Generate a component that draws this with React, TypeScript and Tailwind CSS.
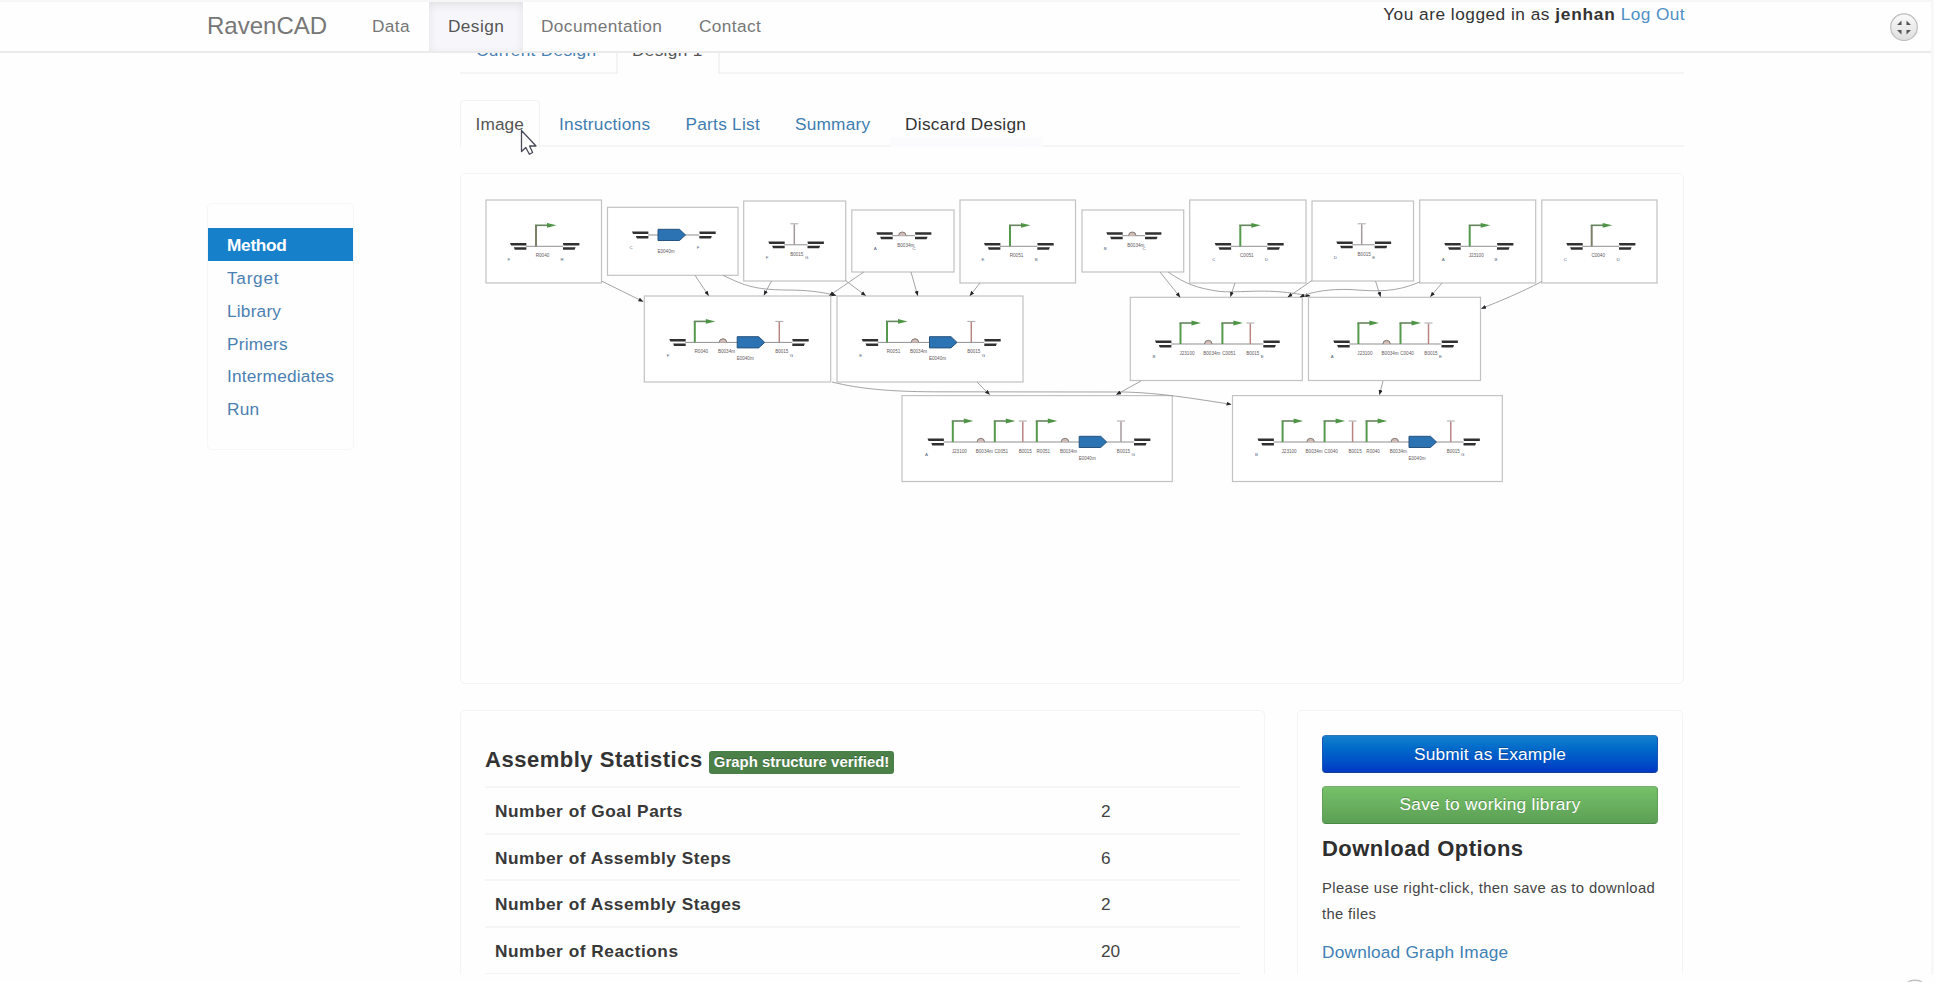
import type { ReactNode } from 'react';

const INK = '#9a9a9d';

type Glyph =
  | { k: 'p'; x: number; t: string; c?: string }
  | { k: 'r'; x: number; t: string }
  | { k: 't'; x: number; t: string; c?: string }
  | { k: 'c'; x: number; t: string };

interface NodeSpec {
  box: [number, number, number, number];
  left: number;
  right: number;
  y: number;
  ends: [string, string];
  glyphs: Glyph[];
}

const GREEN = '#559a4c';
const OLIVE = '#7d8069';
const RED = '#b98583';

const nodes: NodeSpec[] = [
  { box: [486, 200, 601.5, 283], left: 510, right: 563, y: 246.3, ends: ['F', 'R'], glyphs: [{ k: 'p', x: 536, t: 'R0040', c: OLIVE }] },
  { box: [607.5, 207.3, 738, 275.3], left: 632, right: 699.3, y: 235, ends: ['C', 'F'], glyphs: [{ k: 'c', x: 657.5, t: 'E0040m' }] },
  { box: [743.7, 201, 845.7, 281], left: 768.3, right: 807.5, y: 244.8, ends: ['F', 'G'], glyphs: [{ k: 't', x: 794.3, t: 'B0015', c: '#a3999a' }] },
  { box: [851.8, 210, 954, 272], left: 876.3, right: 915, y: 235.7, ends: ['A', 'C'], glyphs: [{ k: 'r', x: 902.3, t: 'B0034m' }] },
  { box: [960, 200, 1075.5, 283], left: 984, right: 1037.3, y: 246.3, ends: ['E', 'B'], glyphs: [{ k: 'p', x: 1010, t: 'R0051' }] },
  { box: [1082, 210, 1183.7, 272], left: 1106.3, right: 1145, y: 235.7, ends: ['B', 'C'], glyphs: [{ k: 'r', x: 1132.3, t: 'B0034m' }] },
  { box: [1189.7, 200, 1306, 283], left: 1214.7, right: 1267.3, y: 246.3, ends: ['C', 'D'], glyphs: [{ k: 'p', x: 1240.3, t: 'C0051' }] },
  { box: [1312, 201, 1413.5, 281], left: 1336.3, right: 1374.7, y: 244.8, ends: ['D', 'E'], glyphs: [{ k: 't', x: 1361.7, t: 'B0015', c: '#a3999a' }] },
  { box: [1419.7, 200, 1535.7, 283], left: 1444.3, right: 1497, y: 246.3, ends: ['A', 'B'], glyphs: [{ k: 'p', x: 1469.7, t: 'J23100' }] },
  { box: [1541.8, 200, 1657, 283], left: 1566.3, right: 1619, y: 246.3, ends: ['C', 'D'], glyphs: [{ k: 'p', x: 1591.7, t: 'C0040', c: OLIVE }] },
  {
    box: [644.3, 296, 830.7, 382], left: 669.3, right: 792.3, y: 342.4, ends: ['F', 'G'],
    glyphs: [{ k: 'p', x: 694.8, t: 'R0040' }, { k: 'r', x: 723, t: 'B0034m' }, { k: 'c', x: 736.7, t: 'E0040m' }, { k: 't', x: 779.3, t: 'B0015' }],
  },
  {
    box: [837, 296, 1023, 382], left: 861.7, right: 984.3, y: 342.4, ends: ['E', 'G'],
    glyphs: [{ k: 'p', x: 887, t: 'R0051' }, { k: 'r', x: 915, t: 'B0034m' }, { k: 'c', x: 929, t: 'E0040m' }, { k: 't', x: 971.3, t: 'B0015' }],
  },
  {
    box: [1130.3, 297.3, 1302.3, 380.5], left: 1155, right: 1263.3, y: 344, ends: ['B', 'E'],
    glyphs: [{ k: 'p', x: 1180.5, t: 'J23100' }, { k: 'r', x: 1208.3, t: 'B0034m' }, { k: 'p', x: 1222.4, t: 'C0051' }, { k: 't', x: 1250.3, t: 'B0015' }],
  },
  {
    box: [1308.5, 297.3, 1480.5, 380.5], left: 1333.3, right: 1441.5, y: 344, ends: ['A', 'E'],
    glyphs: [{ k: 'p', x: 1358.4, t: 'J23100' }, { k: 'r', x: 1386.6, t: 'B0034m' }, { k: 'p', x: 1400.5, t: 'C0040' }, { k: 't', x: 1428.5, t: 'B0015' }],
  },
  {
    box: [902, 395.6, 1172.3, 481.5], left: 927.5, right: 1134, y: 442, ends: ['A', 'G'],
    glyphs: [
      { k: 'p', x: 952.8, t: 'J23100' }, { k: 'r', x: 980.8, t: 'B0034m' }, { k: 'p', x: 994.8, t: 'C0051' }, { k: 't', x: 1022.8, t: 'B0015' },
      { k: 'p', x: 1036.8, t: 'R0051' }, { k: 'r', x: 1065, t: 'B0034m' }, { k: 'c', x: 1078.7, t: 'E0040m' }, { k: 't', x: 1121, t: 'B0015', c: '#a59a9d' },
    ],
  },
  {
    box: [1232.5, 395.6, 1502.3, 481.5], left: 1257.5, right: 1463.5, y: 442, ends: ['B', 'G'],
    glyphs: [
      { k: 'p', x: 1282.6, t: 'J23100' }, { k: 'r', x: 1310.6, t: 'B0034m' }, { k: 'p', x: 1324.6, t: 'C0040' }, { k: 't', x: 1352.6, t: 'B0015' },
      { k: 'p', x: 1366.6, t: 'R0040' }, { k: 'r', x: 1394.8, t: 'B0034m' }, { k: 'c', x: 1408.5, t: 'E0040m' }, { k: 't', x: 1450.8, t: 'B0015' },
    ],
  },
];

const edges = [
  'M601.5 281L643 301.5',
  'M695 275.3L708.5 295.5',
  'M723 275.3C745 286 755 289.5 785 290C808 290 822 292 836 295.5',
  'M771.5 281L764 295',
  'M845.5 280.5L865.5 295.5',
  'M863.8 272L829.5 295.5',
  'M911 272L917.7 295.5',
  'M980 283L970 295.5',
  'M1160 272L1180 297',
  'M1168 272C1186 284 1196 288 1220 291.5C1250 293 1265 287.5 1310 296',
  'M1235 283L1230.5 296.5',
  'M1312 280.5L1288 297',
  'M1375.5 281L1380.5 296.5',
  'M1419.7 282C1395 292.5 1378 291.5 1350 289.5C1330 289 1314 291 1300 297',
  'M1442 283L1430.5 296.5',
  'M1541.8 281.5C1520 293 1500 301 1481.5 308.5',
  'M832 382C860 389 890 391.5 933 391.8L1125 392C1160 393 1190 398 1231 404.3',
  'M977 382L989.5 394.5',
  'M1141 381L1116.5 394.5',
  'M1383 381L1379.5 394.5',
];

function Bars({ x, y, flip }: { x: number; y: number; flip?: boolean }) {
  return (
    <g fill="#2f302f">
      <path d={`M${x} ${y - 3.4}h16.4v2.5h-${flip ? 16 : 15.4}z`} />
      <path d={flip ? `M${x} ${y + 1}h12.6l-1 2.5h-11.6z` : `M${x + 3.8} ${y + 1}h12.6v2.5h-11.6z`} />
    </g>
  );
}

function Label({ x, y, children }: { x: number; y: number; children: ReactNode }) {
  return (
    <text x={x} y={y} textAnchor="middle" fontSize="4.6" fill="#5f5a5d">
      {children}
    </text>
  );
}

function Part({ g, y }: { g: Glyph; y: number }) {
  if (g.k === 'p') {
    const c = g.c ?? GREEN;
    return (
      <g>
        <path d={`M${g.x} ${y}V${y - 21}`} stroke={c} strokeWidth="2" fill="none" />
        <path d={`M${g.x - 1} ${y - 21}h14`} stroke="#66855f" strokeWidth="1.6" fill="none" />
        <path d={`M${g.x + 11} ${y - 23.4}l9.5 2.4l-9.5 2.4z`} fill="#4f9447" />
        <Label x={g.x + 6.5} y={y + 11}>{g.t}</Label>
      </g>
    );
  }
  if (g.k === 'r') {
    return (
      <g>
        <path d={`M${g.x - 3.7} ${y}a3.7 3.7 0 0 1 7.4 0`} fill="#d2bcb8" stroke="#77726c" strokeWidth=".9" />
        <Label x={g.x + 3.5} y={y + 11}>{g.t}</Label>
      </g>
    );
  }
  if (g.k === 't') {
    return (
      <g>
        <path d={`M${g.x} ${y}V${y - 20.5}`} stroke={g.c ?? RED} strokeWidth="1.5" />
        <path d={`M${g.x - 4} ${y - 21}h8`} stroke="#aaa6a6" strokeWidth="1" />
        <Label x={g.x + 2.5} y={y + 11}>{g.t}</Label>
      </g>
    );
  }
  return (
    <g>
      <path d={`M${g.x + 0.5} ${y - 5.7}h21.5l6 5.7l-6 5.5h-21.5z`} fill="#2c73b4" stroke="#28537c" strokeWidth="1" />
      <Label x={g.x + 8.5} y={y + 18}>{g.t}</Label>
    </g>
  );
}

function AssemblyGraph() {
  return (
    <svg className="block h-full w-full" viewBox="461 174 1222 509" fontFamily="Liberation Sans, Arial, sans-serif">
      <defs>
        <marker id="tip" markerUnits="userSpaceOnUse" markerWidth="6" markerHeight="6" refX="4.5" refY="2" orient="auto">
          <path d="M0 0L5 2L0 4z" fill="#26262a" />
        </marker>
      </defs>
      {nodes.map((n, i) => {
        const [x1, y1, x2, y2] = n.box;
        return (
          <g key={i}>
            <rect x={x1} y={y1} width={x2 - x1} height={y2 - y1} fill="#fff" stroke="#c2c2c4" strokeWidth="1.2" />
            <path d={`M${n.left + 16} ${n.y}H${n.right}`} stroke="#8f8f90" strokeWidth="1" />
            <Bars x={n.left} y={n.y} />
            <Bars x={n.right} y={n.y} flip />
            {n.glyphs.map((g, j) => (
              <Part key={j} g={g} y={n.y} />
            ))}
            <text x={n.left - 2.5} y={n.y + 14.3} fontSize="4.4" fill="#50627a">{n.ends[0]}</text>
            <text x={n.right - 2.5} y={n.y + 14.3} fontSize="4.4" fill="#50627a">{n.ends[1]}</text>
          </g>
        );
      })}
      {edges.map((d) => (
        <path key={d} d={d} fill="none" stroke={INK} strokeWidth=".9" markerEnd="url(#tip)" />
      ))}
    </svg>
  );
}

function Header() {
  return (
    <header className="relative z-10 h-[53px] shrink-0 border-b-2 border-[#ebebeb] bg-[#fefefe]">
      <div className="h-[2px] bg-[#f6f6f6]" />
      <div className="ml-[207px] flex h-[49px] w-[1478px]">
        <a className="w-[151px] pt-[10px] text-[24px] leading-[28px] text-[#777]">RavenCAD</a>
        <nav className="flex flex-1 tracking-[0.4px] text-[#777]">
          <a className="w-[71px] pt-[13px] pl-[14px] leading-[23px]">Data</a>
          <a className="w-[94px] bg-[#f7f6fa] pt-[13px] pl-[19px] leading-[23px] text-[#555] shadow-[inset_0_3px_8px_rgba(0,0,0,0.09)]">Design</a>
          <a className="w-[158px] pt-[13px] pl-[18px] leading-[23px]">Documentation</a>
          <a className="pt-[13px] pl-[18px] leading-[23px]">Contact</a>
        </nav>
        <p className="text-right leading-[24px] tracking-[0.5px] whitespace-nowrap text-[#333]">
          You are logged in as <b className="tracking-[0.75px]">jenhan</b> <a className="tracking-[0.4px] text-[#4f8fc4]">Log Out</a>
        </p>
      </div>
      <svg className="absolute top-[12px] left-[1888px] h-[32px] w-[32px]" viewBox="0 0 32 32">
        <defs>
          <linearGradient id="knob" x1="0" y1="0" x2="0" y2="1">
            <stop offset="0" stopColor="#fafafa" />
            <stop offset="1" stopColor="#dedede" />
          </linearGradient>
        </defs>
        <circle cx="16" cy="15.2" r="13.3" fill="url(#knob)" stroke="#bdbdbd" strokeWidth="1.2" />
        <path d="M13.5 8.5v4.5H9zM18.5 8.5v4.5H23zM13.5 22.5V18H9zM18.5 22.5V18H23z" fill="#555" />
      </svg>
    </header>
  );
}

function Sidebar() {
  const items = ['Library', 'Primers', 'Intermediates', 'Run'];
  return (
    <aside className="mt-[150px] ml-[207px] h-[247px] w-[147px] shrink-0 rounded-[5px] border border-[#f6f6f6] pt-[24px]">
      <a className="block h-[33px] bg-[#1780cb] pl-[19px] leading-[34px] font-bold tracking-[-0.3px] text-white">Method</a>
      <a className="block h-[32.8px] pl-[19px] leading-[34px] tracking-[0.7px] text-[#4b80b2]">Target</a>
      {items.map((t) => (
        <a key={t} className="block h-[32.8px] pl-[19px] leading-[34px] tracking-[0.2px] text-[#4b80b2]">{t}</a>
      ))}
    </aside>
  );
}

function Tabs() {
  return (
    <>
      <div className="-mt-[26px] flex h-[47px] border-b-2 border-[#f5f5f5] leading-[47px] tracking-[0.3px]">
        <a className="w-[156px] pl-[16px] whitespace-nowrap text-[#4b80b2]">Current Design</a>
        <a className="h-[47px] w-[104px] border-x-2 border-[#f3f3f3] bg-[#fefefe] pl-[14px] text-[#555]">Design 1</a>
      </div>
      <div className="mt-[26px] flex h-[47px] border-b-2 border-[#f5f5f5] leading-[48px] whitespace-nowrap tracking-[0.25px] text-[#3f7cb0]">
        <a className="mr-[4px] h-[47px] w-[80px] rounded-t-[4px] border border-b-0 border-[#f3f3f3] bg-[#fefefe] pl-[14.5px] leading-[46px] tracking-[0.1px] text-[#555]">Image</a>
        <a className="w-[127px] pl-[15px]">Instructions</a>
        <a className="w-[109px] pl-[14.5px]">Parts List</a>
        <a className="w-[110px] pl-[15px] tracking-[0.2px]">Summary</a>
        <a className="h-[47px] w-[153px] bg-linear-to-b from-transparent from-78% to-[#fbfbfe] to-80% pl-[15px] tracking-[0.3px] text-[#333]">Discard Design</a>
      </div>
    </>
  );
}

function Statistics() {
  const rows = [
    ['Number of Goal Parts', '2'],
    ['Number of Assembly Steps', '6'],
    ['Number of Assembly Stages', '2'],
    ['Number of Reactions', '20'],
    ['', ''],
  ];
  return (
    <section className="h-[400px] w-[805px] rounded-[5px] border border-[#f4f4f4] px-[24px] pt-[34px]">
      <div className="flex h-[41px]">
        <h4 className="text-[22px] leading-[30px] font-bold tracking-[0.52px] text-[#333]">Assembly Statistics</h4>
        <span className="mt-[6px] ml-[6px] h-[22.5px] rounded-[3px] bg-[#4b8149] px-[5px] text-[14.9px] leading-[22px] font-bold tracking-[0.04px] whitespace-nowrap text-white [text-shadow:0_-1px_0_rgba(0,0,0,0.25)]">
          Graph structure verified!
        </span>
      </div>
      {rows.map(([name, value], i) => (
        <div key={i} className="flex h-[46.7px] border-t-2 border-[#f5f5f5] leading-[46px] text-[#444]">
          <b className="w-[616px] pl-[10px] tracking-[0.52px] text-[#383838]">{name}</b>
          <span>{value}</span>
        </div>
      ))}
    </section>
  );
}

function Actions() {
  return (
    <section className="mr-[1px] h-[400px] w-[386px] rounded-[5px] border border-[#f4f4f4] px-[24px] pt-[24px]">
      <button className="block h-[38px] w-full rounded-[4px] border border-[#1a57b5] border-t-[#2e76b5] border-b-[#123d92] bg-linear-to-b from-[#1680cc] to-[#0338c4] leading-[35px] tracking-[0.2px] text-white [text-shadow:0_-1px_0_rgba(0,0,0,0.25)]">
        Submit as Example
      </button>
      <button className="mt-[12.5px] block h-[38px] w-full rounded-[4px] border border-[#5f9f58] border-t-[#79ab72] border-b-[#4b8846] bg-linear-to-b from-[#76c169] to-[#5c9f55] leading-[35px] tracking-[0.28px] text-white [text-shadow:0_-1px_0_rgba(0,0,0,0.25)]">
        Save to working library
      </button>
      <h4 className="mt-[9px] text-[22px] leading-[32px] font-bold tracking-[0.45px] text-[#2e2e2e]">Download Options</h4>
      <p className="mt-[10px] text-[14.8px] leading-[26px] tracking-[0.36px] whitespace-nowrap text-[#444]">
        Please use right-click, then save as to download
        <br />
        the files
      </p>
      <a className="mt-[13px] block leading-[24px] tracking-[0.2px] text-[#4080b5]">Download Graph Image</a>
    </section>
  );
}

export default function App() {
  return (
    <div className="relative h-[982px] w-[1934px] overflow-hidden bg-[#f8f8f8] font-['Liberation_Sans',Arial,sans-serif] text-[17.27px]">
      <div className="flex h-[974px] w-[1931px] flex-col overflow-hidden bg-[#fefefe]">
        <Header />
        <div className="flex min-h-0 flex-1 overflow-hidden">
          <Sidebar />
          <main className="ml-[106px] w-[1224px] shrink-0">
            <Tabs />
            <section className="mt-[26px] h-[511px] rounded-[5px] border border-[#f4f4f4]">
              <AssemblyGraph />
            </section>
            <div className="mt-[26px] flex justify-between">
              <Statistics />
              <Actions />
            </div>
          </main>
        </div>
      </div>
      <div className="h-[8px] bg-[#fefefe]" />
      <svg className="absolute top-[979px] left-[1900px] h-[30px] w-[30px]" viewBox="0 0 30 30">
        <circle cx="15" cy="14.5" r="13.3" fill="#f7f7f7" stroke="#bbb" strokeWidth="1.2" />
      </svg>
      <svg className="absolute top-[129px] left-[519px] h-[28px] w-[20px]" viewBox="0 0 20 28">
        <path d="M2.5 1.5V22.5L6.8 18.5L10.4 25.3L13.6 23.5L10.6 17H17z" fill="#fff" stroke="#4a4a5a" strokeWidth="1.3" strokeLinejoin="round" />
      </svg>
    </div>
  );
}
